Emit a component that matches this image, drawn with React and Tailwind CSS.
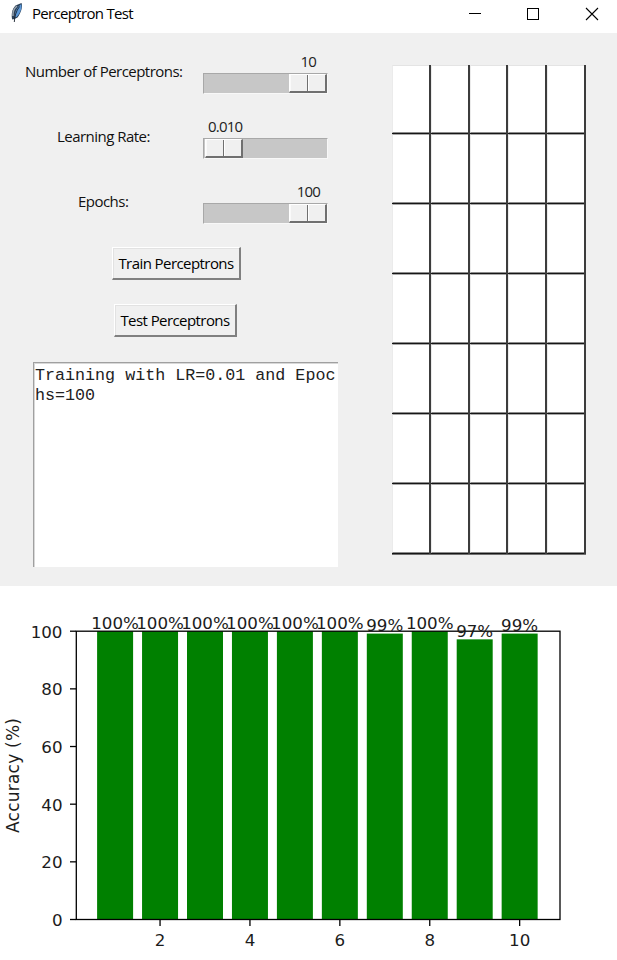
import React from "react";

const UI = "font-['Open_Sans','Noto_Sans',sans-serif]";

function Feather() {
  return (
    <svg width="14" height="22" viewBox="0 0 14 22" className="block">
      <path d="M2.200 17.500 C1 13 2 7 5.500 3.500 L11.500 1 C13 4 11 11 7.500 15.500 L4.500 17 Z" fill="#2b3f56" />
      <path d="M5 15.300 C4.300 11 6.500 5.500 11.200 1.900 C12.300 6 10.300 11 6.600 14.900 Z" fill="#5a97d8" />
      <path d="M3 14 C2.500 10 4.200 6.500 7 4" stroke="#98a3ae" strokeWidth="1.500" fill="none" />
      <path d="M4.300 20 C4.500 15 6 9 9.500 4.500" stroke="#17202b" strokeWidth="0.900" fill="none" />
    </svg>
  );
}

function TitleBar() {
  return (
    <header className="flex h-[33px] items-start bg-white">
      <div className="ml-[10px] mt-[2px]">
        <Feather />
      </div>
      <span className={`${UI} ml-2 mt-[3px] text-[15px] leading-5 tracking-[-0.68px] whitespace-nowrap text-black`}>
        Perceptron Test
      </span>
      <svg width="148" height="28" className="ml-auto block" fill="none" stroke="#000">
        <path d="M0 13.500 H12" />
        <rect x="58.500" y="8.500" width="11" height="11" />
        <path d="M117 8 L129 20 M129 8 L117 20" strokeWidth="1.100" />
      </svg>
    </header>
  );
}

function Slider({ value, atEnd, pad }) {
  return (
    <div className="flex w-[125px] flex-col">
      <div className={`${UI} -mt-0.5 flex h-[22px] text-[15px] leading-5 tracking-[-0.8px] text-[#222] ${atEnd ? "justify-end" : "justify-start"} ${pad}`}>
        {value}
      </div>
      <div className={`flex h-[21px] border border-t-[#a8a8a8] border-l-[#a8a8a8] border-r-[#f8f8f8] border-b-[#f8f8f8] bg-[#c7c7c7] ${atEnd ? "justify-end" : "justify-start pl-px"}`}>
        <div className="flex h-[19px] w-[38px] border-t border-l border-r-2 border-b-2 border-t-white border-l-white border-r-[#707070] border-b-[#707070] bg-[#f0f0f0]">
          <div className="w-[18px] border-r border-l border-l-[#fafafa] border-r-[#707070]" />
          <div className="flex-1 border-l border-l-white" />
        </div>
      </div>
    </div>
  );
}

function Setting({ label, left, ...slider }) {
  return (
    <div className="flex h-[65px]">
      <div className={`${UI} w-[203px] pt-[8px] text-[15px] leading-5 tracking-[-0.53px] whitespace-nowrap text-[#111] ${left}`}>
        {label}
      </div>
      <Slider {...slider} />
    </div>
  );
}

function Button({ children, className }) {
  return (
    <button className={`${UI} flex h-[33px] items-center justify-center border-t border-l border-r-2 border-b-2 border-t-white border-l-white border-r-[#808080] border-b-[#808080] bg-[#f0f0f0] pb-px text-[15px] leading-5 tracking-[-0.57px] whitespace-nowrap text-black shadow-[inset_1px_1px_0_#e2e2e2] ${className}`}>
      {children}
    </button>
  );
}

function PixelGrid() {
  return (
    <div className="mt-8 ml-[54px] grid h-[489px] w-[194px] grid-cols-[39px_39px_38px_39px_39px] grid-rows-[69px_70px_70px_70px_70px_70px_70px] shadow-[0_1px_0_#707070]">
      {Array.from({ length: 35 }, (_, i) => (
        <div key={i} className="flex flex-col border-r-2 border-r-[#3c3c3c] bg-white">
          <div
            className={`flex-1 border-t border-l border-b border-l-[#ebebeb] border-b-[#8c8c8c] ${i < 5 ? "border-t-[#e4e4e4]" : "border-t-[#a8a8a8]"}`}
          />
          <div className="h-px bg-[#161616]" />
        </div>
      ))}
    </div>
  );
}

const RESULTS = [100, 100, 100, 100, 100, 100, 99, 100, 97, 99];
const yOf = (v) => 333.500 - v * 2.883;
const xOf = (n) => 115.100 + (n - 1) * 44.950;

function Chart() {
  return (
    <svg width="617" height="374" viewBox="0 0 617 374" className="block bg-white font-['DejaVu_Sans',sans-serif] text-[16.7px]">
      {RESULTS.map((v, i) => (
        <rect key={i} x={xOf(i + 1) - 18} y={yOf(v) - (v < 100 ? 0.500 : 0)} width="36" height={v * 2.883} fill="#008000" />
      ))}
      <g fill="none" stroke="#000" strokeWidth="1.300">
        <rect x="76.300" y="45.200" width="483.700" height="288.300" />
        {[0, 20, 40, 60, 80, 100].map((v) => (
          <path key={v} d={`M70 ${yOf(v)} H76`} />
        ))}
        {[2, 4, 6, 8, 10].map((v) => (
          <path key={v} d={`M${xOf(v)} 334 V340`} />
        ))}
      </g>
      <g fill="#1c1c1c">
        {[0, 20, 40, 60, 80, 100].map((v) => (
          <text key={v} x="62.500" y={yOf(v) + 6.500} textAnchor="end">{v}</text>
        ))}
        {[2, 4, 6, 8, 10].map((v) => (
          <text key={v} x={xOf(v)} y="360" textAnchor="middle">{v}</text>
        ))}
        {RESULTS.map((v, i) => (
          <text key={i} x={xOf(i + 1)} y={yOf(v) - 2.700} textAnchor="middle">{`${v}%`}</text>
        ))}
        <text transform="translate(18.500 189.500) rotate(-90)" textAnchor="middle" fontSize="17" textLength="115">Accuracy (%)</text>
      </g>
    </svg>
  );
}

export default function App() {
  return (
    <div className="h-[960px] w-[617px] overflow-hidden bg-white">
      <TitleBar />
      <main className="flex h-[553px] bg-[#f0f0f0]">
        <section className="flex w-[338px] flex-col pt-5">
          <Setting label="Number of Perceptrons:" left="pl-[25px]" value="10" atEnd pad="pr-[12px]" />
          <Setting label="Learning Rate:" left="pl-[57px]" value="0.010" pad="pl-[5px]" />
          <Setting label="Epochs:" left="pl-[78px]" value="100" atEnd pad="pr-[8px]" />
          <Button className="-mt-px ml-[112px] w-[129px]">Train Perceptrons</Button>
          <Button className="mt-[24px] ml-[114px] w-[123px]">Test Perceptrons</Button>
          <div className="mt-[25px] ml-[33px] h-[205px] w-[305px] border-t border-l border-t-[#a0a0a0] border-l-[#a0a0a0] bg-white pt-[3px] pl-px font-['Liberation_Mono',monospace] text-[16.700px] leading-5 break-all text-[#222] shadow-[inset_1px_1px_0_#d8d8d8]">
            Training with LR=0.01 and Epochs=100
          </div>
        </section>
        <PixelGrid />
      </main>
      <Chart />
    </div>
  );
}
